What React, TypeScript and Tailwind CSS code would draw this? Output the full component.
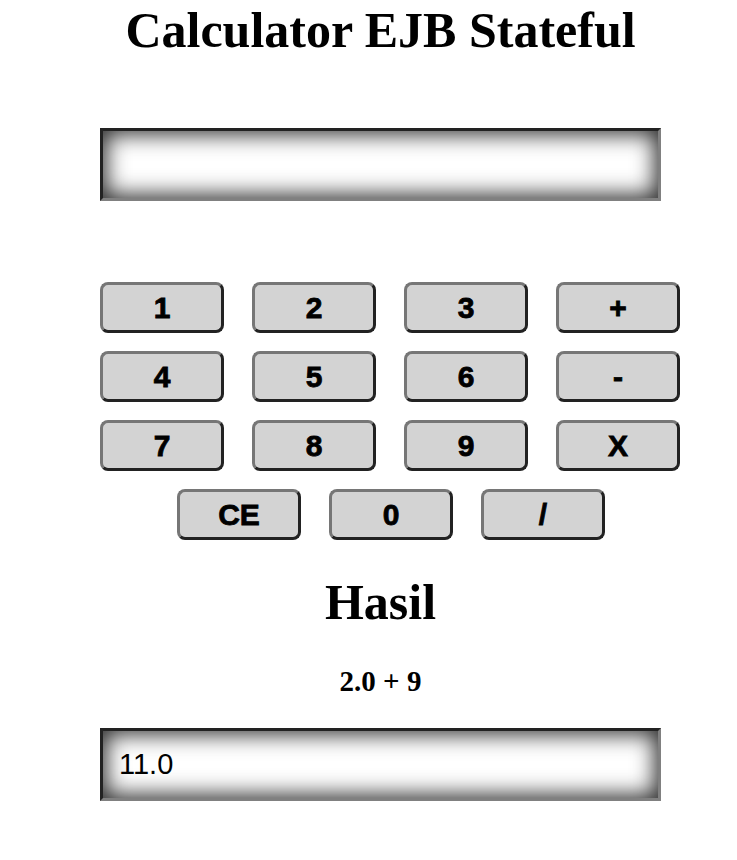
export default function App() {
  const rows = [
    ["1", "2", "3", "+"],
    ["4", "5", "6", "-"],
    ["7", "8", "9", "X"],
  ];
  const last = ["CE", "0", "/"];

  const btn =
    "w-[124px] h-[51px] rounded-[8px] border-[3px] border-solid border-t-[#767676] border-l-[#767676] border-b-[#222] border-r-[#222] bg-[#d3d3d3] text-black text-[30px] font-bold leading-none [-webkit-text-stroke:0.8px_black] flex items-center justify-center";

  const display =
    "w-[561px] h-[73px] border-[3px] border-solid border-t-[#222] border-l-[#222] border-b-[#808080] border-r-[#808080] bg-white shadow-[inset_0_0_22px_3px_rgba(0,0,0,0.85)] pl-[16px] flex items-center text-[29px] text-black";

  return (
    <div className="min-h-screen bg-white pl-[100px] font-['Liberation_Serif',serif]">
      <div className="w-[561px]">
        <h1 className="pt-[5px] text-center text-[50px] font-bold leading-none">
          Calculator EJB Stateful
        </h1>

        <div className={`${display} mt-[73px]`}></div>
      </div>

      <div className="mt-[81px] w-[580px] flex flex-col gap-[18px] font-['Liberation_Sans',Arial,sans-serif]">
        {rows.map((row, i) => (
          <div key={i} className="flex gap-[28px]">
            {row.map((k) => (
              <button key={k} className={btn}>
                {k}
              </button>
            ))}
          </div>
        ))}
        <div className="flex gap-[28px] pl-[77px]">
          {last.map((k) => (
            <button key={k} className={btn}>
              {k}
            </button>
          ))}
        </div>
      </div>

      <div className="w-[561px]">
        <h2 className="mt-[37px] text-center text-[50px] font-bold leading-none">
          Hasil
        </h2>
        <p className="mt-[40px] text-center text-[29px] font-bold leading-none">
          2.0 + 9
        </p>
        <div className={`${display} mt-[32px] font-['Liberation_Sans',Arial,sans-serif]`}>
          11.0
        </div>
      </div>
    </div>
  );
}
